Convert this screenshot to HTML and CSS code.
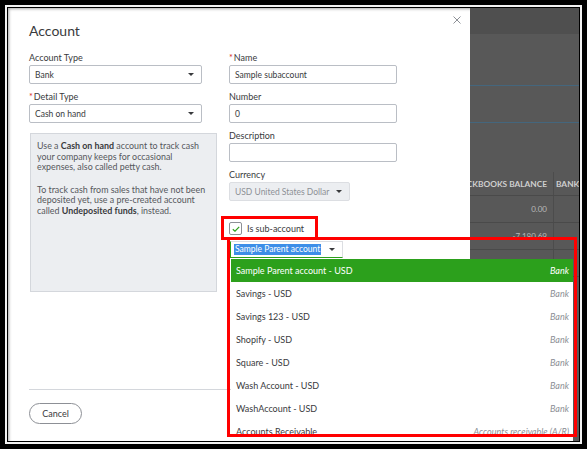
FILE: index.html
```html
<!DOCTYPE html>
<html lang="en">
<head>
  <meta charset="UTF-8" />
  <meta name="viewport" content="width=device-width, initial-scale=1.0" />
  <title>Account</title>
  <link rel="stylesheet" href="styles.css">
</head>
<body>
  <div class="screen">
    <div class="bezel">
      <div class="stage">

        <section class="modal">
          <header class="modal-head">
            <h1>Account</h1>
            <button class="close" aria-label="Close">
              <svg viewBox="0 0 8 8" width="8" height="8"><path d="M0.5 0.5L7.5 7.5M7.5 0.5L0.5 7.5" stroke="#8d9096" stroke-width="1" fill="none"/></svg>
            </button>
          </header>

          <div class="form">
            <div class="col">
              <div class="field">
                <label>Account Type</label>
                <div class="input select wide">Bank</div>
              </div>
              <div class="field">
                <label><span class="req">*</span>Detail Type</label>
                <div class="input select wide">Cash on hand</div>
              </div>
              <div class="hint">
                <p>Use a <b>Cash on hand</b> account to track cash your company keeps for occasional expenses, also called petty cash.</p>
                <p>To track cash from sales that have not been deposited yet, use a pre-created account called <b>Undeposited funds</b>, instead.</p>
              </div>
            </div>

            <div class="col">
              <div class="field">
                <label><span class="req">*</span>Name</label>
                <div class="input">Sample subaccount</div>
              </div>
              <div class="field">
                <label>Number</label>
                <div class="input">0</div>
              </div>
              <div class="field">
                <label>Description</label>
                <div class="input"></div>
              </div>
              <div class="field">
                <label>Currency</label>
                <div class="input select currency">USD United States Dollar</div>
              </div>
              <label class="subacct">
                <span class="checkbox">
                  <svg viewBox="0 0 8 6" width="8" height="6"><path d="M0.8 3.2L3 5.2L7.2 0.8" stroke="#2ca01c" stroke-width="1.2" fill="none"/></svg>
                </span>
                Is sub-account
              </label>
              <div class="input select parent"><span class="picked">Sample Parent account</span></div>
            </div>
          </div>

          <footer class="modal-foot">
            <button class="btn-cancel">Cancel</button>
          </footer>
        </section>

        <!-- register page behind the dialog -->
        <aside class="backdrop">
          <div class="backdrop-top"></div>
          <div class="rule first"></div>
          <div class="rule second"></div>
          <div class="reg-row reg-head">
            <div class="cell num"><span>QUICKBOOKS BALANCE</span></div>
            <div class="cell rest">BANK BALANCE</div>
          </div>
          <div class="reg-row">
            <div class="cell num"><span>0.00</span></div>
            <div class="cell rest"></div>
          </div>
          <div class="reg-row">
            <div class="cell num"><span>-7,180.69</span></div>
            <div class="cell rest"></div>
          </div>
          <div class="reg-row">
            <div class="cell num"><span></span></div>
            <div class="cell rest"></div>
          </div>
        </aside>

        <ul class="menu">
          <li class="active"><span>Sample Parent account - USD</span><em>Bank</em></li>
          <li><span>Savings - USD</span><em>Bank</em></li>
          <li><span>Savings 123 - USD</span><em>Bank</em></li>
          <li><span>Shopify - USD</span><em>Bank</em></li>
          <li><span>Square - USD</span><em>Bank</em></li>
          <li><span>Wash Account - USD</span><em>Bank</em></li>
          <li><span>WashAccount - USD</span><em>Bank</em></li>
          <li><span>Accounts Receivable</span><em>Accounts receivable (A/R)</em></li>
        </ul>

        <div class="mark mark-check"></div>
        <div class="mark mark-list"></div>
      </div>
    </div>
  </div>
</body>
</html>
```

FILE: styles.css
```css
* {
  box-sizing: border-box;
}

body {
  margin: 0;
  background: #000;
  font-family: Lato, "Open Sans", sans-serif;
  color: #393a3d;
}

.screen {
  width: 587px;
  height: 449px;
  padding: 5px;
  background: #000;
}

.bezel {
  height: 100%;
  border: 2px solid #f2f2f2;
}

.stage {
  position: relative;
  height: 100%;
  border: 1px solid #000;
  display: grid;
  grid-template-columns: 462px 1fr;
  overflow: hidden;
}

/* Dialog */
.modal {
  display: flex;
  flex-direction: column;
  background: #fff;
  padding: 14px 0 0 21px;
  box-shadow: inset 2px 2px 3px -1px rgba(0, 0, 0, 0.35);
}

.modal-head {
  display: flex;
  justify-content: space-between;
  align-items: flex-start;
  padding-right: 9px;
}

.modal-head h1 {
  margin: 0;
  font-size: 14px;
  line-height: 18px;
  font-weight: 400;
  color: #393a3d;
}

.close {
  width: 8px;
  height: 8px;
  margin-top: -6px;
  padding: 0;
  border: none;
  background: none;
  display: flex;
}

.form {
  display: grid;
  grid-template-columns: 188px 168px;
  column-gap: 12px;
  align-items: start;
  margin-top: 12px;
}

.field {
  margin-bottom: 7px;
}

.field label {
  display: block;
  font-size: 9px;
  line-height: 12px;
  margin-bottom: 1px;
}

.req {
  color: #d52b1e;
  margin-right: 1px;
}

.input {
  position: relative;
  display: flex;
  align-items: center;
  height: 19px;
  padding: 0 5px;
  border: 1px solid #babec5;
  border-radius: 2px;
  font-size: 8.5px;
  color: #393a3d;
  background: #fff;
}

.select::after {
  content: "";
  position: absolute;
  right: 7px;
  top: 7px;
  border-left: 3px solid transparent;
  border-right: 3px solid transparent;
  border-top: 3px solid #393a3d;
}

.wide {
  width: 173px;
}

.currency {
  width: 121px;
  background: #eceef1;
  border-color: #dcdee2;
  color: #8d9096;
}

.hint {
  width: 187px;
  height: 159px;
  margin: 10px 0 0 1px;
  padding: 7px 6px;
  background: #eceef1;
  border: 1px solid #d4d7dc;
  font-size: 8.9px;
  line-height: 10.6px;
  color: #55575c;
}

.hint p {
  margin: 0 0 12px;
}

.hint b {
  color: #393a3d;
}

.subacct {
  display: flex;
  align-items: center;
  gap: 5px;
  height: 13px;
  margin-top: 21px;
  font-size: 9px;
}

.checkbox {
  display: flex;
  align-items: center;
  justify-content: center;
  width: 13px;
  height: 13px;
  border: 1px solid #8d9096;
  border-radius: 2px;
}

.parent {
  width: 113px;
  height: 17px;
  margin: 6px 0 0 1px;
  padding-left: 3px;
  border-color: #dcdee2 #dcdee2 #2ca01c #2ca01c;
  border-radius: 0;
}

.parent::after {
  right: 7px;
  top: 6px;
}

.picked {
  background: #3d8ee8;
  color: #fff;
  line-height: 11px;
  padding: 0 1px;
}

.modal-foot {
  margin: auto 21px 0 0;
  padding: 13px 0 17px;
  border-top: 1px solid #d4d7dc;
}

.btn-cancel {
  display: block;
  width: 53px;
  height: 21px;
  padding: 0;
  border: 1px solid #8d9096;
  border-radius: 11px;
  background: #fff;
  font-family: inherit;
  font-size: 9px;
  color: #393a3d;
}

/* Page behind the dialog */
.backdrop {
  display: flex;
  flex-direction: column;
  background: #585858;
  overflow: hidden;
}

.backdrop-top {
  height: 26px;
  background: #4f4f4f;
}

.rule {
  height: 1px;
  background: #44667d;
}

.rule.first {
  margin-top: 51px;
}

.rule.second {
  margin-top: 36px;
}

.reg-row {
  display: flex;
  height: 27px;
  border-bottom: 1px solid #4a4a4a;
  font-size: 8px;
  color: #b9b9b9;
}

.reg-head {
  height: 24px;
  margin-top: 49px;
  font-weight: 700;
  font-size: 8.3px;
  color: #cfcfcf;
}

.cell {
  display: flex;
  align-items: center;
  white-space: nowrap;
  min-width: 0;
}

.cell.num {
  flex: 0 0 84px;
  justify-content: flex-end;
  padding-right: 6px;
  border-right: 1px solid #4c4c4c;
}

.cell.num span {
  flex-shrink: 0;
}

.cell.rest {
  flex: 1;
  padding-left: 2px;
  overflow: hidden;
}

/* Parent account dropdown */
.menu {
  position: absolute;
  left: 223px;
  top: 251px;
  width: 342px;
  height: 182px;
  margin: 0;
  padding: 0;
  list-style: none;
  background: #fff;
  overflow: hidden;
}

.menu li {
  display: flex;
  justify-content: space-between;
  align-items: center;
  height: 23px;
  padding: 0 4px 0 5px;
  font-size: 9px;
  color: #393a3d;
}

.menu em {
  color: #8d9096;
}

.menu li.active {
  background: #2ca01c;
  color: #fff;
}

.menu li.active em {
  color: #fff;
}

/* Red call-out boxes */
.mark {
  position: absolute;
  border: 3px solid #ff0000;
  pointer-events: none;
}

.mark-check {
  left: 213px;
  top: 208px;
  width: 97px;
  height: 24px;
}

.mark-list {
  left: 219px;
  top: 229px;
  width: 350px;
  height: 200px;
}
```
